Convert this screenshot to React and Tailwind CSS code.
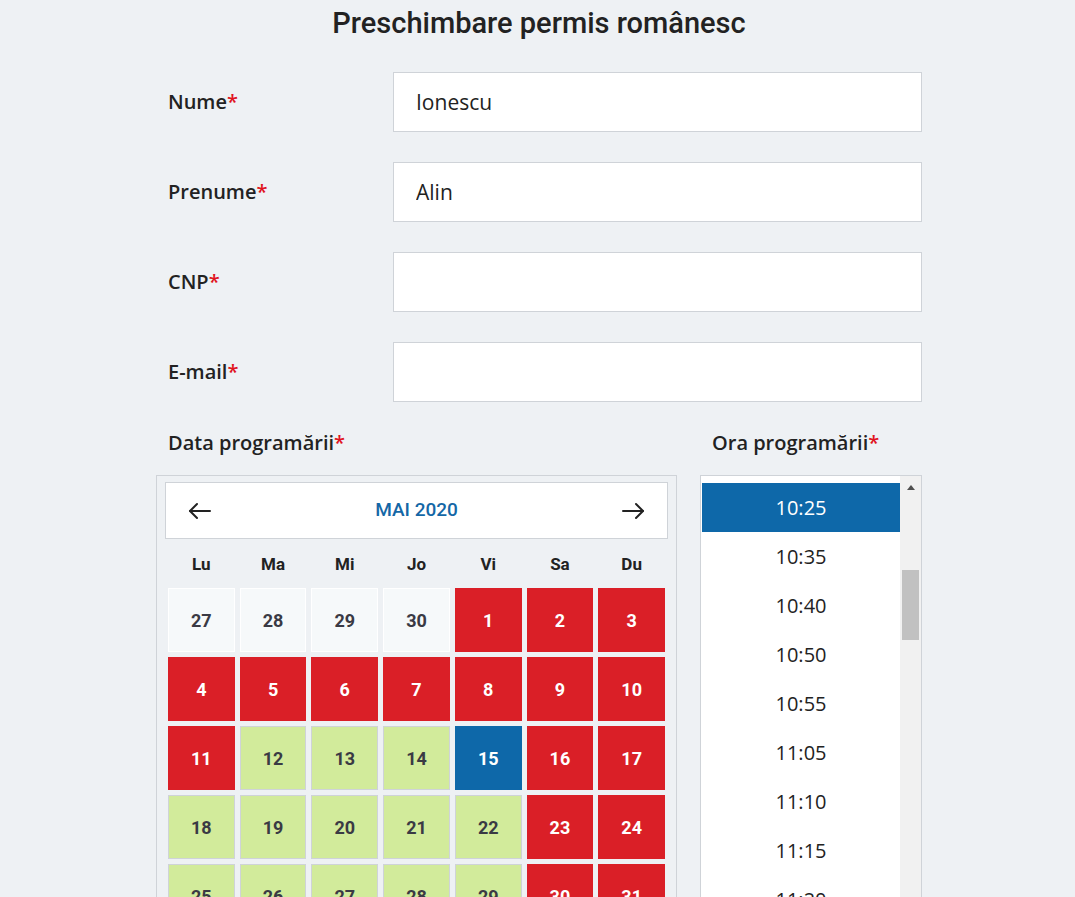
import { useState } from "react";

const days = ["Lu", "Ma", "Mi", "Jo", "Vi", "Sa", "Du"];

// s: p = past, r = red (full), g = green (free), b = selected
const cells = [
  [27, "p"], [28, "p"], [29, "p"], [30, "p"], [1, "r"], [2, "r"], [3, "r"],
  [4, "r"], [5, "r"], [6, "r"], [7, "r"], [8, "r"], [9, "r"], [10, "r"],
  [11, "r"], [12, "g"], [13, "g"], [14, "g"], [15, "b"], [16, "r"], [17, "r"],
  [18, "g"], [19, "g"], [20, "g"], [21, "g"], [22, "g"], [23, "r"], [24, "r"],
  [25, "g"], [26, "g"], [27, "g"], [28, "g"], [29, "g"], [30, "r"], [31, "r"],
];

const times = ["10:25", "10:35", "10:40", "10:50", "10:55", "11:05", "11:10", "11:15", "11:20"];

const cellStyle = {
  p: "bg-[#f6f9fa] border border-white text-[#3a3a44]",
  r: "bg-[#da1f27] text-white",
  g: "bg-[#d2eb9b] border border-[#cfd3d8] text-[#3a3a44]",
  b: "bg-[#0e68a9] text-white",
};

function Field({ label, value }) {
  return (
    <div className="flex items-center">
      <label className="w-[237px] pl-3 font-['Open_Sans',sans-serif] text-[20px] font-semibold text-[#222]">
        {label}
        <span className="text-[#e0141e]">*</span>
      </label>
      <input
        defaultValue={value}
        className="h-[60px] w-[529px] border border-[#cfd3d8] bg-white px-[22px] font-['Open_Sans',sans-serif] text-[21px] text-[#222] outline-none"
      />
    </div>
  );
}

function Arrow({ dir }) {
  return (
    <svg width="24" height="18" viewBox="0 0 24 18" fill="none" stroke="#222" strokeWidth="2" strokeLinecap="round" strokeLinejoin="round">
      {dir === "left" ? (
        <>
          <path d="M22 9H2" />
          <path d="M9 2L2 9l7 7" />
        </>
      ) : (
        <>
          <path d="M2 9h20" />
          <path d="M15 2l7 7-7 7" />
        </>
      )}
    </svg>
  );
}

export default function App() {
  const [time, setTime] = useState("10:25");

  return (
    <div className="min-h-screen bg-[#eef1f4] pl-[156px] font-['Roboto','Noto_Sans',sans-serif]">
      <div className="w-[766px]">
        <h1 className="h-[44px] pt-[2px] text-center text-[29px] font-medium leading-[42px] text-[#222]">
          Preschimbare permis românesc
        </h1>

        <div className="mt-[28px] flex flex-col gap-[30px]">
          <Field label="Nume" value="Ionescu" />
          <Field label="Prenume" value="Alin" />
          <Field label="CNP" value="" />
          <Field label="E-mail" value="" />
        </div>

        <div className="mt-[26px] flex gap-[23px]">
          {/* calendar */}
          <div className="w-[521px]">
            <div className="h-[30px] pl-3 font-['Open_Sans',sans-serif] text-[20px] font-semibold leading-[30px] text-[#222]">
              Data programării<span className="text-[#e0141e]">*</span>
            </div>
            <div className="mt-[17px] border border-[#cfd3d8] px-[8px] pt-[6px] pb-3">
              <div className="flex h-[57px] items-center justify-between border border-[#cfd3d8] bg-white px-[22px]">
                <Arrow dir="left" />
                <span className="text-[19px] font-medium text-[#1467a6]">MAI 2020</span>
                <Arrow dir="right" />
              </div>
              <div className="px-[3px]">
                <div className="grid h-[49px] grid-cols-7 items-center gap-x-[5px] pt-[2px] text-center text-[17px] font-bold text-[#222]">
                  {days.map((d) => (
                    <div key={d}>{d}</div>
                  ))}
                </div>
                <div className="grid grid-cols-7 gap-x-[5px] gap-y-[5px]">
                  {cells.map(([n, s], i) => (
                    <div
                      key={i}
                      className={`flex h-[64px] items-center justify-center text-[18px] font-bold ${cellStyle[s]}`}
                    >
                      {n}
                    </div>
                  ))}
                </div>
              </div>
            </div>
          </div>

          {/* times */}
          <div className="w-[222px]">
            <div className="h-[30px] pl-3 font-['Open_Sans',sans-serif] text-[20px] font-semibold leading-[30px] text-[#222]">
              Ora programării<span className="text-[#e0141e]">*</span>
            </div>
            <div className="mt-[17px] flex h-[430px] overflow-hidden border border-[#cfd3d8] bg-white pl-px">
              <ul className="flex-1 pt-[7px] font-['Open_Sans',sans-serif] text-[20px] text-[#222]">
                {times.map((t) => (
                  <li
                    key={t}
                    onClick={() => setTime(t)}
                    className={`flex h-[49px] cursor-pointer items-center justify-center ${
                      t === time ? "bg-[#0e68a9] text-white" : ""
                    }`}
                  >
                    {t}
                  </li>
                ))}
              </ul>
              <div className="flex w-[21px] flex-col items-center bg-[#f1f1f1]">
                <svg className="mt-[9px]" width="8" height="5" viewBox="0 0 8 5">
                  <path d="M4 0L8 5H0z" fill="#505050" />
                </svg>
                <div className="mt-[80px] h-[70px] w-[17px] bg-[#c1c1c1]" />
              </div>
            </div>
          </div>
        </div>
      </div>
    </div>
  );
}
